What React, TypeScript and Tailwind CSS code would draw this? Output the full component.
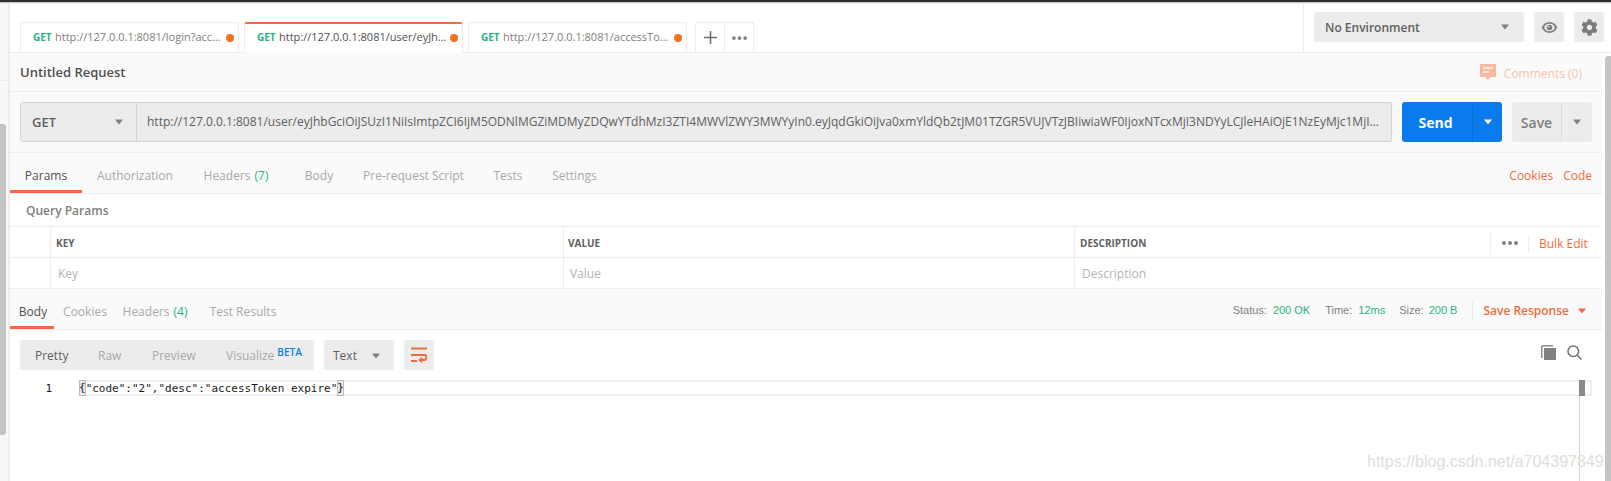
import React from "react";
import { FaCog } from "react-icons/fa";

const OS = "font-['Open_Sans',sans-serif]";

function Caret({ className = "" }: { className?: string }) {
  return (
    <svg width="10" height="6" viewBox="0 0 10 6" className={className}>
      <path d="M0 0h10L5 6z" fill="currentColor" />
    </svg>
  );
}

function Dots({ className = "" }: { className?: string }) {
  return (
    <svg width="16" height="4" viewBox="0 0 16 4" className={className}>
      <circle cx="2" cy="2" r="2" fill="currentColor" />
      <circle cx="8" cy="2" r="2" fill="currentColor" />
      <circle cx="14" cy="2" r="2" fill="currentColor" />
    </svg>
  );
}

function ReqTab({ url, active }: { url: string; active?: boolean }) {
  return (
    <div
      className={`w-[219px] flex items-center pl-[12px] pr-[4px] bg-white border-x border-[#ececec] rounded-t-[3px] ${
        active ? "border-t-2 border-t-[#f26b3a] -mb-px h-[31px] pb-[2px]" : "border-t h-[30px]"
      }`}
    >
      <span className="text-[10px] font-bold text-[#26b47f] w-[22px] shrink-0">GET</span>
      <span className={`text-[11px] whitespace-nowrap flex-1 ${active ? "text-[#505050]" : "text-[#808080]"}`}>{url}</span>
      <span className="w-2 h-2 rounded-full bg-[#f47023] ml-[3px] shrink-0" />
    </div>
  );
}

function Header() {
  return (
    <div className="h-[49px] shrink-0 flex bg-white border-b border-[#ececec]">
      <div className="flex-1 flex items-end pl-[10px] gap-[5px]">
        <ReqTab url="http://127.0.0.1:8081/login?acc…" />
        <ReqTab url="http://127.0.0.1:8081/user/eyJh…" active />
        <ReqTab url="http://127.0.0.1:8081/accessTo…" />
        <div className="ml-[3px] h-[30px] flex border-x border-t border-[#ececec] rounded-t-[3px] bg-white">
          <div className="w-[29px] flex items-center justify-center border-r border-[#ececec]">
            <svg width="13" height="13" viewBox="0 0 13 13">
              <path d="M6.5 0v13M0 6.5h13" stroke="#707070" strokeWidth="1.6" />
            </svg>
          </div>
          <div className="w-[28px] flex items-center justify-center text-[#808080]">
            <Dots className="w-[15px]" />
          </div>
        </div>
      </div>
      <div className="w-[308px] shrink-0 border-l border-[#ececec] flex pl-[10px] pt-[8px] gap-[10px]">
        <div className="w-[210px] h-[30px] bg-[#ececec] rounded-[3px] flex items-center justify-between pl-[11px] pr-[11px]">
          <span className="text-[12px] font-semibold text-[#606060] pt-[2px]">No Environment</span>
          <Caret className="text-[#808080] w-[8px] mr-[4px]" />
        </div>
        <div className="w-[30px] h-[30px] bg-[#ececec] rounded-[3px] flex items-center justify-center">
          <svg width="17" height="11" viewBox="0 0 17 12">
            <path d="M8.5 0C4.6 0 1.6 2.5 0 6c1.6 3.5 4.6 6 8.5 6s6.9-2.5 8.5-6C15.4 2.5 12.4 0 8.5 0z" fill="#808080" />
            <ellipse cx="8.5" cy="6" rx="5.6" ry="4.2" fill="#ececec" />
            <circle cx="8.5" cy="6" r="3" fill="#808080" />
            <circle cx="7.500" cy="5" r="0.9" fill="#ececec" />
          </svg>
        </div>
        <div className="w-[30px] h-[30px] bg-[#ececec] rounded-[3px] flex items-center justify-center text-[#7c7c7c]">
          <FaCog size={17} />
        </div>
      </div>
    </div>
  );
}

function TitleRow() {
  return (
    <div className="h-[39px] shrink-0 flex items-center justify-between border-b border-[#ececec] pl-[10px] pr-[20px]">
      <span className="text-[13px] font-semibold text-[#505050] pt-[2px]">Untitled Request</span>
      <div className="flex items-center text-[#f9c3ae] text-[12px]">
        <svg width="16" height="17" viewBox="0 0 16 17" className="mr-[8px]">
          <path d="M0 0h16v13h-5l-3 3-3-3H0z" fill="#f9b8a0" />
          <path d="M3 4h10M3 8h6" stroke="#fff4ef" strokeWidth="1.5" />
        </svg>
        <span className="pt-[3px]">Comments (0)</span>
      </div>
    </div>
  );
}

function UrlRow() {
  return (
    <div className="h-[61px] shrink-0 flex pt-[10px] pl-[10px] pr-[10px] border-b border-[#ececec]">
      <div className="w-[117px] h-[40px] bg-[#ececec] border border-[#d4d4d4] rounded-l-[3px] flex items-center justify-between pl-[11px] pr-[13px]">
        <span className="text-[13px] font-semibold text-[#606060] pt-[2px]">GET</span>
        <Caret className="text-[#808080] w-[8px]" />
      </div>
      <div className="w-[1255px] h-[40px] bg-[#ececec] border-y border-r border-[#d4d4d4] rounded-r-[2px] flex items-center pl-[10px] pr-[10px] min-w-0">
        <span className="text-[12px] text-[#606060] truncate">
          http://127.0.0.1:8081/user/eyJhbGciOiJSUzI1NiIsImtpZCI6IjM5ODNlMGZiMDMyZDQwYTdhMzI3ZTI4MWVlZWY3MWYyIn0.eyJqdGkiOiJva0xmYldQb2tJM01TZGR5VUJVTzJBIiwiaWF0IjoxNTcxMjI3NDYyLCJleHAiOjE1NzEyMjc1MjIsIm5iZiI6MTU3MTIyNzQ2Mn0
        </span>
      </div>
      <div className="ml-[10px] w-[100px] h-[40px] bg-[#097bed] rounded-[3px] flex text-white">
        <div className="flex-1 flex items-center justify-center text-[14px] font-bold pr-[3px]">Send</div>
        <div className="w-[30px] border-l border-[#0a6fd4] flex items-center justify-center">
          <Caret className="w-[8px]" />
        </div>
      </div>
      <div className="ml-[10px] w-[80px] h-[40px] bg-[#ececec] rounded-[3px] flex text-[#808080]">
        <div className="flex-1 flex items-center justify-center text-[14px] font-semibold">Save</div>
        <div className="w-[31px] border-l border-[#dcdcdc] flex items-center justify-center">
          <Caret className="w-[8px]" />
        </div>
      </div>
    </div>
  );
}

function Tab({ label, w, count, active }: { label: string; w: string; count?: string; active?: boolean }) {
  return (
    <div
      className={`${w} h-full flex items-center justify-center whitespace-nowrap text-[12px] -mb-px pt-[8px] ${
        active ? "text-[#505050] border-b-[3px] border-[#f26b3a]" : "text-[#a9a9a9] border-b-[3px] border-transparent"
      }`}
    >
      {label}
      {count && <span className="text-[#26b47f] ml-[4px]">{count}</span>}
    </div>
  );
}

function RequestTabs() {
  return (
    <div className="h-[41px] shrink-0 flex items-stretch border-b border-[#ececec] pr-[10px]">
      <Tab label="Params" w="w-[72px]" active />
      <Tab label="Authorization" w="w-[106px]" />
      <Tab label="Headers" count="(7)" w="w-[96px]" />
      <Tab label="Body" w="w-[64px] pl-[6px]" />
      <Tab label="Pre-request Script" w="w-[129px] pl-[2px]" />
      <Tab label="Tests" w="w-[60px] pl-[2px]" />
      <Tab label="Settings" w="w-[75px]" />
      <div className="flex-1 flex items-center justify-end text-[12px] text-[#f26b3a] gap-[10px] pt-[6px]">
        <span>Cookies</span>
        <span>Code</span>
      </div>
    </div>
  );
}

function ParamsTable() {
  return (
    <div className="bg-white shrink-0">
      <div className="h-[33px] flex items-center pl-[16px] border-b border-[#ececec]">
        <span className="text-[12px] font-semibold text-[#808080] pt-[2px]">Query Params</span>
      </div>
      <div className="h-[31px] flex border-b border-[#ececec] text-[10px] font-bold text-[#606060]">
        <div className="w-[41px] border-r border-[#ececec]" />
        <div className="w-[513px] pl-[5px] pt-[2px] border-r border-[#ececec] flex items-center">KEY</div>
        <div className="w-[511px] pl-[4px] pt-[2px] border-r border-[#ececec] flex items-center">VALUE</div>
        <div className="flex-1 pl-[5px] pt-[2px] flex items-center">DESCRIPTION</div>
        <div className="h-[22px] mt-[5px] w-[38px] border-l border-[#ececec] flex items-center justify-center text-[#808080]">
          <Dots className="w-[16px]" />
        </div>
        <div className="h-[17px] mt-[8px] border-l border-[#ececec] w-[74px] pl-[10px] flex items-center text-[12px] font-normal text-[#f26b3a]">
          Bulk Edit
        </div>
      </div>
      <div className="h-[31px] flex border-b border-[#ececec] text-[12px] text-[#b3b3b3]">
        <div className="w-[41px] border-r border-[#ececec]" />
        <div className="w-[513px] pl-[7px] pt-[2px] border-r border-[#ececec] flex items-center">Key</div>
        <div className="w-[511px] pl-[6px] pt-[2px] border-r border-[#ececec] flex items-center">Value</div>
        <div className="flex-1 pl-[7px] pt-[2px] flex items-center">Description</div>
      </div>
    </div>
  );
}

function ResponseBar() {
  return (
    <div className="h-[41px] shrink-0 flex items-stretch border-b border-[#ececec] pr-[16px]">
      <Tab label="Body" w="w-[44px] pl-[2px]" active />
      <Tab label="Cookies" w="w-[60px] pl-[2px]" />
      <Tab label="Headers" count="(4)" w="w-[82px]" />
      <Tab label="Test Results" w="w-[94px]" />
      <div className="flex-1 flex items-center justify-end pt-[3px] text-[11px] font-['Liberation_Sans',sans-serif] text-[#808080]">
        <span>Status:</span>
        <span className="text-[#26b47f] ml-[6px]">200 OK</span>
        <span className="ml-[15px]">Time:</span>
        <span className="text-[#26b47f] ml-[6px]">12ms</span>
        <span className="ml-[14px]">Size:</span>
        <span className="text-[#26b47f] ml-[5px]">200 B</span>
        <div className="h-[20px] ml-[15px] border-l border-[#ececec] pl-[10px] flex items-center font-['Open_Sans',sans-serif] text-[12px] font-semibold text-[#f26b3a]">
          Save Response
          <Caret className="w-[8px] ml-[9px]" />
        </div>
      </div>
    </div>
  );
}

function Bracket({ children }: { children: string }) {
  return <span className="h-[16px] inline-flex items-center bg-[#e8e8e8] shadow-[inset_0_0_0_1px_#bdbdbd]">{children}</span>;
}

function ResponseBody() {
  return (
    <div className="flex-1 bg-[#fffffd] relative overflow-hidden">
      <div className="flex items-start pt-[10px] pl-[10px] pr-[20px]">
        <div className="w-[294px] h-[30px] pt-[2px] bg-[#ececec] rounded-[3px] flex items-center text-[12px] text-[#a9a9a9] pl-[15px]">
          <span className="text-[#606060] w-[63px]">Pretty</span>
          <span className="w-[54px]">Raw</span>
          <span className="w-[74px]">Preview</span>
          <span>Visualize</span>
          <span className="text-[10px] font-semibold text-[#097bed] ml-[3px] -mt-[7px]">BETA</span>
        </div>
        <div className="ml-[10px] w-[70px] h-[30px] pt-[2px] bg-[#ececec] rounded-[3px] flex items-center justify-between pl-[9px] pr-[14px] text-[12px] text-[#606060]">
          Text
          <Caret className="w-[8px] text-[#808080]" />
        </div>
        <div className="ml-[10px] w-[30px] h-[30px] bg-[#ececec] rounded-[3px] flex items-center justify-center">
          <svg width="16" height="16" viewBox="0 0 16 16" fill="none" stroke="#f26b3a" strokeWidth="2">
            <path d="M0 1.500h16M0 8h13a2.500 2.500 0 010 5H9M0 14h6" />
            <path d="M11 10.500L8.500 13l2.500 2.500" strokeWidth="1.500" />
          </svg>
        </div>
        <div className="ml-auto flex items-center gap-[11px] pt-[5px]">
          <svg width="15" height="15" viewBox="0 0 15 15">
            <path d="M0 1.500A1.500 1.500 0 011.500 0H12v1.500H1.500V13H0z" fill="#8a8a8a" />
            <rect x="3" y="3" width="12" height="12" fill="#808080" />
          </svg>
          <svg width="15" height="15" viewBox="0 0 15 15" fill="none" stroke="#707070" strokeWidth="1.500">
            <circle cx="6.300" cy="6.300" r="5.300" />
            <path d="M10 10l4.500 4.500" />
          </svg>
        </div>
      </div>
      <div className="mt-[10px] flex h-[16px] font-['DejaVu_Sans_Mono',monospace] text-[11px] leading-[16px] text-[#1a1a1a]">
        <div className="w-[42px] text-right shrink-0 pt-px">1</div>
        <div className="ml-[27px] w-[1513px] h-[16px] bg-white shadow-[inset_0_0_0_2px_#f0f0f0] flex items-center whitespace-pre">
          <Bracket>{"{"}</Bracket>
          <span className="pt-px">{'"code":"2","desc":"accessToken expire"'}</span>
          <Bracket>{"}"}</Bracket>
        </div>
      </div>
      <div className="absolute left-[1569px] top-[50px] w-[6px] h-[16px] bg-[#8a8a8a]" />
      <div className="absolute left-[1569px] top-[66px] bottom-0 w-px bg-[#d4d4d4]" />
    </div>
  );
}

export default function App() {
  return (
    <div className={`${OS} w-[1611px] h-[481px] overflow-hidden bg-white flex flex-col relative`}>
      <div className="h-[2px] shrink-0 bg-[#2e2e2e]" />
      <div className="h-[2px] shrink-0 bg-gradient-to-b from-[#b8b8b8] to-white" />
      <div className="flex-1 flex min-h-0">
        <aside className="w-[10px] shrink-0 bg-[#f8f8f8] border-r-2 border-[#ececec] flex flex-col">
          <div className="h-[77px] border-b border-[#ececec]" />
          <div className="mt-[43px] w-[6px] h-[311px] bg-[#c4c4c4] rounded-r-[3px]" />
        </aside>
        <div className="flex-1 flex flex-col min-w-0">
          <Header />
          <div className="flex-1 flex min-h-0">
            <main className="w-[1592px] shrink-0 bg-[#fafafa] flex flex-col">
              <TitleRow />
              <UrlRow />
              <RequestTabs />
              <ParamsTable />
              <ResponseBar />
              <ResponseBody />
            </main>
            <div className="flex-1 bg-white flex justify-end pt-[3px]">
              <div className="w-[6px] bg-[#c4c4c4] rounded-tl-[3px]" />
            </div>
          </div>
        </div>
      </div>
      <div className="absolute left-[1367px] top-[452px] text-[16px] leading-[20px] font-['Liberation_Sans',sans-serif] text-[#dedede] whitespace-nowrap">
        https://blog.csdn.net/a704397849
      </div>
    </div>
  );
}
